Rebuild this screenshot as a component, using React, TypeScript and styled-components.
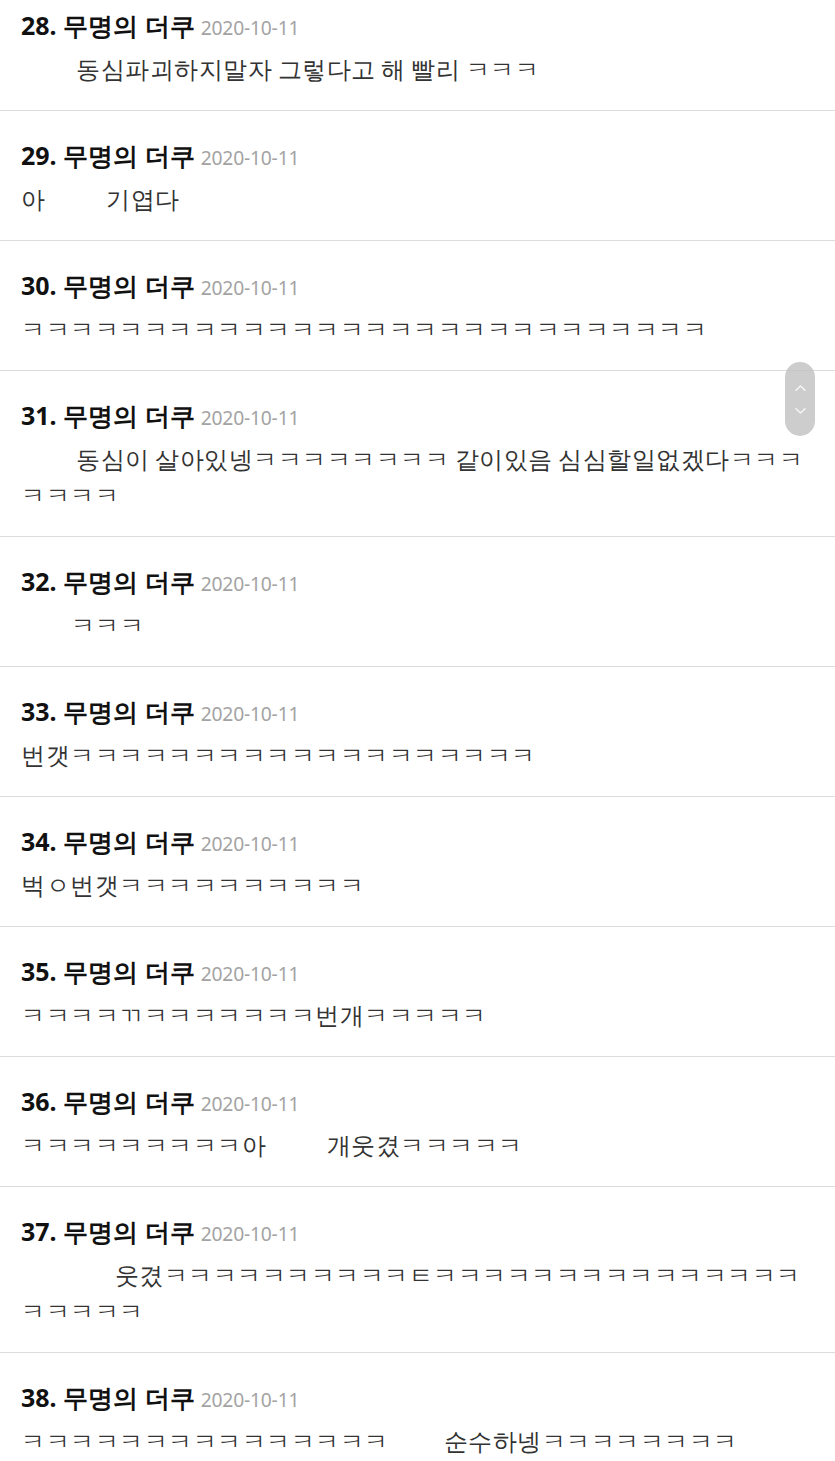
import styled, { createGlobalStyle } from "styled-components";

const GlobalStyle = createGlobalStyle`
    html, body {
        margin: 0;
        padding: 0;
        background: #ffffff;
    }
    body {
        font-family: "Noto Sans", sans-serif;
        overflow: hidden;
    }
`;

const Page = styled.div`
    width: 835px;
    height: 1461px;
    overflow: hidden;
    position: relative;
    background: #fff;
`;

const List = styled.ul`
    list-style: none;
    margin: -19px 0 0 0;
    padding: 0;
`;

const Item = styled.li`
    padding: 30px 22px 23px 21px;
    border-bottom: 1px solid #dcdcdc;
`;

const Head = styled.div`
    display: flex;
    align-items: baseline;
    height: 28px;
    line-height: 28px;
    color: #111;
    white-space: pre;
`;

const Title = styled.span`
    font-size: 25px;
    font-weight: 700;
`;

const Date = styled.span`
    font-size: 19.3px;
    color: #a3a3a3;
    margin-left: 6px;
    letter-spacing: -0.2px;
`;

const Body = styled.p`
    margin: 12px 0 0 0;
    font-size: 24.3px;
    line-height: 36px;
    letter-spacing: 0.5px;
    word-spacing: -1.3px;
    color: #333;
    white-space: pre-wrap;
`;

const Scroller = styled.div`
    position: absolute;
    left: 785px;
    top: 362px;
    width: 30px;
    height: 74px;
    border-radius: 15px;
    background: rgba(192, 192, 192, 0.8);
    display: flex;
    flex-direction: column;
    align-items: center;
    justify-content: center;
    gap: 17px;
`;

const sp = (n: number) => " ".repeat(n);
const k = (n: number) => "ㅋ".repeat(n);

const comments = [
    { no: 28, text: sp(10) + "동심파괴하지말자 그렇다고 해 빨리 ㅋㅋㅋ" },
    { no: 29, text: "아" + sp(11) + "기엽다" },
    { no: 30, text: k(28) },
    { no: 31, text: sp(10) + "동심이 살아있넹" + k(8) + " 같이있음 심심할일없겠다" + k(7) },
    { no: 32, text: sp(9) + k(3) },
    { no: 33, text: "번갯" + k(19) },
    { no: 34, text: "벅ㅇ번갯" + k(10) },
    { no: 35, text: k(4) + "ㄲ" + k(7) + "번개" + k(5) },
    { no: 36, text: k(9) + "아" + sp(11) + "개웃겼" + k(5) },
    { no: 37, text: sp(17) + "웃겼" + k(10) + "ㅌ" + k(20) },
    { no: 38, text: k(15) + sp(10) + "순수하넹" + k(8) },
];

function Chevron({ up }: { up?: boolean }) {
    return (
        <svg width="11" height="6" viewBox="0 0 11 6" fill="none">
            <path
                d={up ? "M1 5.2 L5.5 1 L10 5.2" : "M1 0.8 L5.5 5 L10 0.8"}
                stroke="#f6f6f6"
                strokeWidth="1.5"
                strokeLinecap="round"
                strokeLinejoin="round"
            />
        </svg>
    );
}

export default function App() {
    return (
        <Page>
            <GlobalStyle />
            <List>
                {comments.map((c) => (
                    <Item key={c.no}>
                        <Head>
                            <Title>{c.no}. 무명의 더쿠</Title>
                            <Date>2020-10-11</Date>
                        </Head>
                        <Body>{c.text}</Body>
                    </Item>
                ))}
            </List>
            <Scroller>
                <Chevron up />
                <Chevron />
            </Scroller>
        </Page>
    );
}
